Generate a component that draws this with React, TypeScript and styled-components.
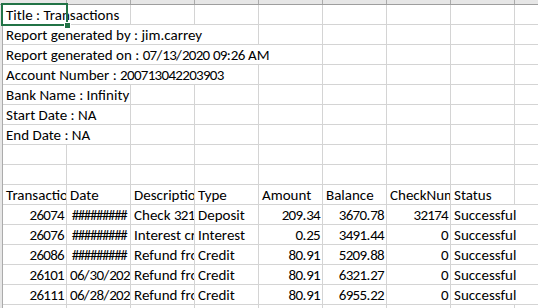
import React from 'react';
import styled, { createGlobalStyle } from 'styled-components';

const GRID = '#d4d4d4';
const EXCEL_GREEN = '#217346';
const COLUMNS = 9;

type Align = 'left' | 'right' | 'center';

type CellData = {
  text?: string;
  span?: number;
  align?: Align;
  hash?: boolean;
};

const INFO: [string, number][] = [
  ['Title : Transactions', 2],
  ['Report generated by : jim.carrey', 4],
  ['Report generated on : 07/13/2020 09:26 AM', 5],
  ['Account Number : 200713042203903', 4],
  ['Bank Name : Infinity', 2],
  ['Start Date : NA', 2],
  ['End Date : NA', 2],
];

const HEADERS = [
  'TransactionId',
  'Date',
  'Description',
  'Type',
  'Amount',
  'Balance',
  'CheckNumber',
  'Status',
];

const TRANSACTIONS = [
  { id: '26074', date: null, desc: 'Check 32174', type: 'Deposit', amount: '209.34', balance: '3670.78', check: '32174' },
  { id: '26076', date: null, desc: 'Interest credit', type: 'Interest', amount: '0.25', balance: '3491.44', check: '0' },
  { id: '26086', date: null, desc: 'Refund from', type: 'Credit', amount: '80.91', balance: '5209.88', check: '0' },
  { id: '26101', date: '06/30/2020', desc: 'Refund from', type: 'Credit', amount: '80.91', balance: '6321.27', check: '0' },
  { id: '26111', date: '06/28/2020', desc: 'Refund from', type: 'Credit', amount: '80.91', balance: '6955.22', check: '0' },
];

const emptyRow = (): CellData[] => Array.from({ length: COLUMNS }, () => ({}));

const buildRows = (): CellData[][] => {
  const rows: CellData[][] = [];
  INFO.forEach(([text, span]) => {
    const row: CellData[] = [{ text, span }];
    for (let i = span; i < COLUMNS; i++) row.push({});
    rows.push(row);
  });
  rows.push(emptyRow(), emptyRow());
  rows.push([...HEADERS.map((text) => ({ text })), {}]);
  TRANSACTIONS.forEach((t) => {
    rows.push([
      { text: t.id, align: 'right' },
      t.date ? { text: t.date } : { text: '#########', align: 'center', hash: true },
      { text: t.desc },
      { text: t.type },
      { text: t.amount, align: 'right' },
      { text: t.balance, align: 'right' },
      { text: t.check, align: 'right' },
      { text: 'Successful', span: 2 },
    ]);
  });
  rows.push(emptyRow());
  return rows;
};

// Excel's hinted digits are a bit narrower than Carlito's, so tighten digit runs
const renderText = (text?: string) => {
  if (!text) return null;
  return text.split(/(\d+)/).map((part, i) =>
    /^\d+$/.test(part) ? <Digits key={i}>{part}</Digits> : part
  );
};

const App = () => {
  const rows = buildRows();
  return (
    <>
      <GlobalStyle />
      <Sheet>
        <ColumnHeaders>
          {Array.from({ length: COLUMNS }, (_, i) => (
            <ColumnHead key={i} />
          ))}
        </ColumnHeaders>
        <Body>
          <RowHeaderEdge />
          <Grid>
            {rows.map((row, r) =>
              row.map((cell, c) => (
                <Cell key={`${r}-${c}`} $span={cell.span} $align={cell.align} $hash={cell.hash}>
                  {cell.hash ? cell.text : renderText(cell.text)}
                </Cell>
              ))
            )}
          </Grid>
        </Body>
        <Selection>
          <FillHandle />
        </Selection>
      </Sheet>
    </>
  );
};

export default App;

const GlobalStyle = createGlobalStyle`
  html, body {
    margin: 0;
    padding: 0;
    background: #fff;
  }
  body {
    font-family: Calibri, Carlito, 'Liberation Sans', sans-serif;
  }
`;

const Sheet = styled.div`
  position: relative;
  width: 538px;
  height: 308px;
  overflow: hidden;
  background: #fff;
  display: flex;
  flex-direction: column;
`;

const ColumnHeaders = styled.div`
  display: flex;
  flex: none;
  height: 4px;
  padding-left: 3px;
  background: #e6e6e6;
  border-bottom: 1px solid #9e9e9e;
`;

const ColumnHead = styled.div`
  flex: none;
  width: 64px;
  box-sizing: border-box;
  border-right: 1px solid #ababab;
`;

const Body = styled.div`
  display: flex;
  flex: 1;
`;

const RowHeaderEdge = styled.div`
  flex: none;
  width: 2px;
  background: #e6e6e6;
  border-right: 1px solid #ababab;
`;

const Grid = styled.div`
  display: grid;
  grid-template-columns: repeat(${COLUMNS}, 64px);
  grid-auto-rows: 20px;
  align-content: start;
`;

const Cell = styled.div<{ $span?: number; $align?: Align; $hash?: boolean }>`
  grid-column: span ${(p) => p.$span ?? 1};
  box-sizing: border-box;
  padding: 0 2px 0 3px;
  border-right: 1px solid ${GRID};
  border-bottom: 1px solid ${GRID};
  overflow: hidden;
  white-space: nowrap;
  text-align: ${(p) => p.$align ?? 'left'};
  font-size: 15px;
  line-height: 21px;
  letter-spacing: ${(p) => (p.$hash ? '-1.4px' : '0')};
  color: #000;
`;

const Digits = styled.span`
  letter-spacing: -0.7px;
`;

const Selection = styled.div`
  position: absolute;
  left: 1px;
  top: 3px;
  width: 67px;
  height: 23px;
  box-sizing: border-box;
  border: 2px solid ${EXCEL_GREEN};
`;

const FillHandle = styled.div`
  position: absolute;
  right: -5px;
  bottom: -5px;
  width: 7px;
  height: 7px;
  box-sizing: border-box;
  background: ${EXCEL_GREEN};
  border: 1px solid #fff;
`;
